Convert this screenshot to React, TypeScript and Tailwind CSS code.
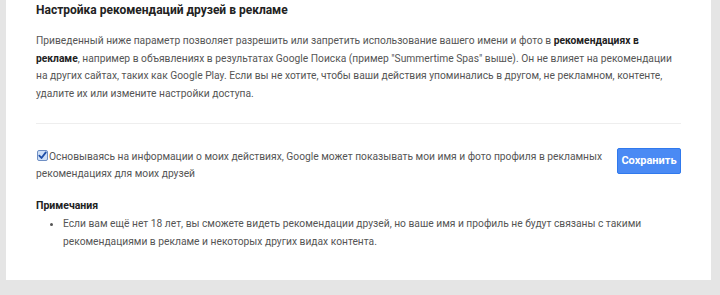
const font = { fontFamily: 'Roboto, "Noto Sans", sans-serif' }

const CheckMark = () => (
  <svg width="11" height="11" viewBox="0 0 11 11" className="shrink-0">
    <rect x="0.5" y="0.5" width="10" height="10" rx="1.5" fill="#cfe0f7" stroke="#6f8fc4" />
    <path d="M2.3 5.6 L4.5 8 L8.8 2.4" fill="none" stroke="#1f4fa8" strokeWidth="1.8" strokeLinecap="round" strokeLinejoin="round" />
  </svg>
)

export default function App() {
  return (
    <div className="min-h-screen bg-[#e5e5e5] pl-[6px] pr-[9px] pb-4" style={font}>
      <div className="bg-white px-[30px] pb-[29px]">
        {/* Section title */}
        <h2 className="text-[12px] leading-[20px] font-bold text-[#222]">
          Настройка рекомендаций друзей в рекламе
        </h2>

        <p className="mt-3 text-[10.25px] leading-[17.5px] text-[#555]">
          Приведенный ниже параметр позволяет разрешить или запретить использование вашего имени и фото в{' '}
          <b className="text-[#222]">рекомендациях в рекламе</b>, например в объявлениях в результатах Google Поиска (пример
          "Summertime Spas" выше). Он не влияет на рекомендации на других сайтах, таких как Google Play. Если вы не хотите,
          чтобы ваши действия упоминались в другом, не рекламном, контенте, удалите их или измените настройки доступа.
        </p>

        <div className="mt-[21px] h-px bg-[#eeeeee]" />

        {/* Setting row */}
        <div className="mt-[24px] flex items-start justify-between">
          <label className="w-[570px] text-[10.25px] leading-[17px] text-[#555]">
            <span className="inline-flex align-[-1px] mr-[1px] ml-[1px]">
              <CheckMark />
            </span>
            Основываясь на информации о моих действиях, Google может показывать мои имя и фото профиля в рекламных
            рекомендациях для моих друзей
          </label>
          <button className="h-[26px] w-[64px] rounded-[2px] border border-[#3079ed] bg-[#4a8af4] text-[11px] font-bold text-white">
            Сохранить
          </button>
        </div>

        {/* Notes */}
        <h3 className="mt-[15px] text-[10.5px] leading-[17px] font-bold text-[#222]">Примечания</h3>
        <ul className="mt-px list-disc pl-[27px] text-[10.25px] leading-[18px] text-[#555]">
          <li>
            Если вам ещё нет 18 лет, вы сможете видеть рекомендации друзей, но ваше имя и профиль не будут связаны с такими
            рекомендациями в рекламе и некоторых других видах контента.
          </li>
        </ul>
      </div>
    </div>
  )
}
